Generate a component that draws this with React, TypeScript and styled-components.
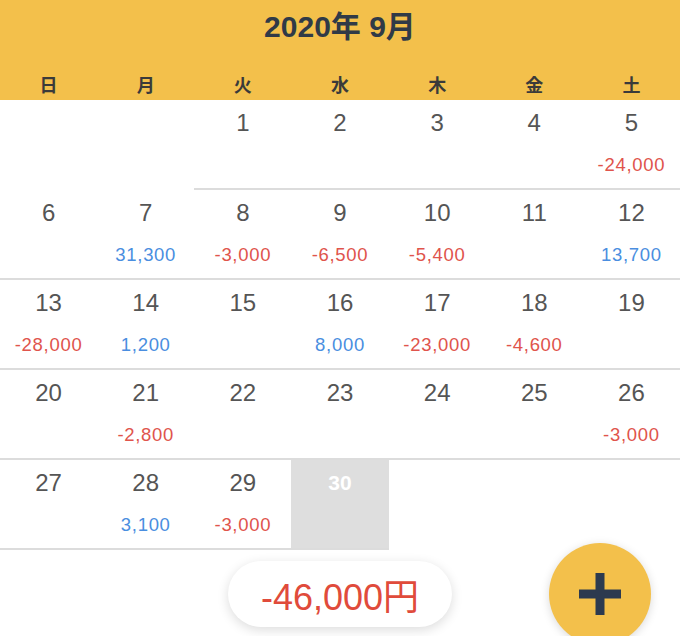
import React from 'react'
import styled, { createGlobalStyle } from 'styled-components'

const GlobalStyle = createGlobalStyle`
	html, body {
		margin: 0;
		padding: 0;
		background: #ffffff;
	}
	body {
		font-family: 'Liberation Sans', 'Noto Sans CJK JP', sans-serif;
	}
`

const Page = styled.div`
	position: relative;
	width: 680px;
	height: 636px;
	overflow: hidden;
	background: #ffffff;
`
const Header = styled.header`
	background: #f3c04b;
	padding: 10px 0 5px;
`
const Title = styled.h1`
	margin: 0;
	font-size: 30px;
	line-height: 34px;
	font-weight: 700;
	text-align: center;
	color: #303a47;
	font-family: 'Liberation Sans', 'Noto Sans CJK JP', sans-serif;
`
const WeekRow = styled.div`
	display: grid;
	grid-template-columns: repeat(7, 1fr);
	margin-top: 29px;
`
const WeekDay = styled.div`
	text-align: center;
	font-size: 18px;
	line-height: 22px;
	font-weight: 700;
	color: #3a3a3a;
	font-family: 'Noto Sans CJK JP', sans-serif;
`
const Grid = styled.div`
	display: grid;
	grid-template-columns: repeat(7, 1fr);
	grid-auto-rows: 90px;
`
const Cell = styled.div<{ $blank?: boolean; $today?: boolean }>`
	box-sizing: border-box;
	display: flex;
	flex-direction: column;
	align-items: center;
	padding-top: 9px;
	border-bottom: ${(p) => (p.$blank ? 'none' : '2px solid #dcdcdc')};
	background: ${(p) => (p.$today ? '#dedede' : 'transparent')};
`
const DayNum = styled.span<{ $today?: boolean }>`
	font-size: ${(p) => (p.$today ? '21px' : '24px')};
	line-height: 28px;
	font-weight: ${(p) => (p.$today ? 700 : 400)};
	color: ${(p) => (p.$today ? '#ffffff' : '#555555')};
`
const Amount = styled.span<{ $plus: boolean }>`
	margin-top: 17px;
	font-size: 18.5px;
	line-height: 22px;
	letter-spacing: 0.7px;
	color: ${(p) => (p.$plus ? '#4a8ee0' : '#e0544c')};
`
const Footer = styled.div`
	display: flex;
	justify-content: center;
	margin-top: 11px;
`
const TotalPill = styled.div`
	height: 66px;
	padding: 0 33px;
	display: flex;
	align-items: center;
	border-radius: 33px;
	background: #ffffff;
	box-shadow: 0 3px 12px rgba(0, 0, 0, 0.14);
	font-size: 36px;
	color: #e04b3b;
	font-family: 'Liberation Sans', 'Noto Sans CJK JP', sans-serif;
`
const AddButton = styled.button`
	position: absolute;
	right: 29px;
	top: 543px;
	width: 102px;
	height: 102px;
	border-radius: 50%;
	border: none;
	padding: 0;
	background: #f3c04b;
	box-shadow: 0 2px 10px rgba(0, 0, 0, 0.15);
	display: flex;
	align-items: center;
	justify-content: center;
	cursor: pointer;
`

type Day = { day: number; amount?: number } | null

const weeks: Day[][] = [
	[null, null, { day: 1 }, { day: 2 }, { day: 3 }, { day: 4 }, { day: 5, amount: -24000 }],
	[
		{ day: 6 },
		{ day: 7, amount: 31300 },
		{ day: 8, amount: -3000 },
		{ day: 9, amount: -6500 },
		{ day: 10, amount: -5400 },
		{ day: 11 },
		{ day: 12, amount: 13700 },
	],
	[
		{ day: 13, amount: -28000 },
		{ day: 14, amount: 1200 },
		{ day: 15 },
		{ day: 16, amount: 8000 },
		{ day: 17, amount: -23000 },
		{ day: 18, amount: -4600 },
		{ day: 19 },
	],
	[
		{ day: 20 },
		{ day: 21, amount: -2800 },
		{ day: 22 },
		{ day: 23 },
		{ day: 24 },
		{ day: 25 },
		{ day: 26, amount: -3000 },
	],
	[{ day: 27 }, { day: 28, amount: 3100 }, { day: 29, amount: -3000 }, { day: 30 }],
]

const TODAY = 30
const weekDays = ['日', '月', '火', '水', '木', '金', '土']

const yen = (n: number) => {
	const s = String(Math.abs(n)).replace(/\B(?=(\d{3})+(?!\d))/g, ',')
	return n < 0 ? '-' + s : s
}

const App = () => {
	return (
		<Page>
			<GlobalStyle />
			<Header>
				<Title>2020年 9月</Title>
				<WeekRow>
					{weekDays.map((w) => (
						<WeekDay key={w}>{w}</WeekDay>
					))}
				</WeekRow>
			</Header>
			<Grid>
				{weeks.flat().map((d, i) =>
					d ? (
						<Cell key={i} $today={d.day === TODAY}>
							<DayNum $today={d.day === TODAY}>{d.day}</DayNum>
							{d.amount !== undefined && <Amount $plus={d.amount > 0}>{yen(d.amount)}</Amount>}
						</Cell>
					) : (
						<Cell key={i} $blank />
					)
				)}
			</Grid>
			<Footer>
				<TotalPill>-46,000円</TotalPill>
			</Footer>
			<AddButton aria-label="追加">
				<svg width="42" height="42" viewBox="0 0 42 42">
					<rect x="0" y="16.5" width="42" height="9" fill="#2c3a4f" />
					<rect x="16.5" y="0" width="9" height="42" fill="#2c3a4f" />
				</svg>
			</AddButton>
		</Page>
	)
}

export default App
